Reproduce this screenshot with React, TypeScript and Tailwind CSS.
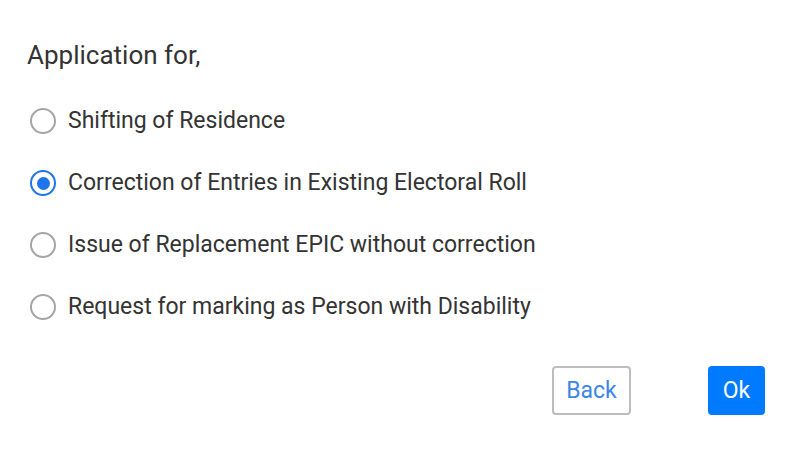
const options = [
  'Shifting of Residence',
  'Correction of Entries in Existing Electoral Roll',
  'Issue of Replacement EPIC without correction',
  'Request for marking as Person with Disability',
]

function Radio({ checked }: { checked: boolean }) {
  return (
    <span
      className={
        'flex h-[26px] w-[26px] shrink-0 items-center justify-center rounded-full border-2 ' +
        (checked ? 'border-[#1f75ea]' : 'border-[#a5a5a5]')
      }
    >
      {checked && <span className="h-[13px] w-[13px] rounded-full bg-[#1f75ea]" />}
    </span>
  )
}

export default function App() {
  return (
    <div className="h-[450px] w-[800px] bg-white font-['Roboto',sans-serif] text-[#333]">
      <div className="px-[27px] pt-[40px]">
        <p className="text-[26px] leading-[30px]">Application for,</p>

        <ul className="mt-[38px] flex flex-col gap-[36px]">
          {options.map((label, i) => (
            <li key={label} className="flex h-[26px] items-center gap-[12px] pl-[3px]">
              <Radio checked={i === 1} />
              <span className="text-[23px]">{label}</span>
            </li>
          ))}
        </ul>

        <div className="mt-[46px] flex justify-end gap-[77px] pr-[8px]">
          <button className="h-[49px] w-[79px] rounded-[4px] border-2 border-[#bdbdbd] bg-white pt-[2px] text-[23px] text-[#3d86e6]">
            Back
          </button>
          <button className="h-[49px] w-[57px] rounded-[4px] bg-[#007bff] pt-[2px] text-[23px] text-white">
            Ok
          </button>
        </div>
      </div>
    </div>
  )
}
